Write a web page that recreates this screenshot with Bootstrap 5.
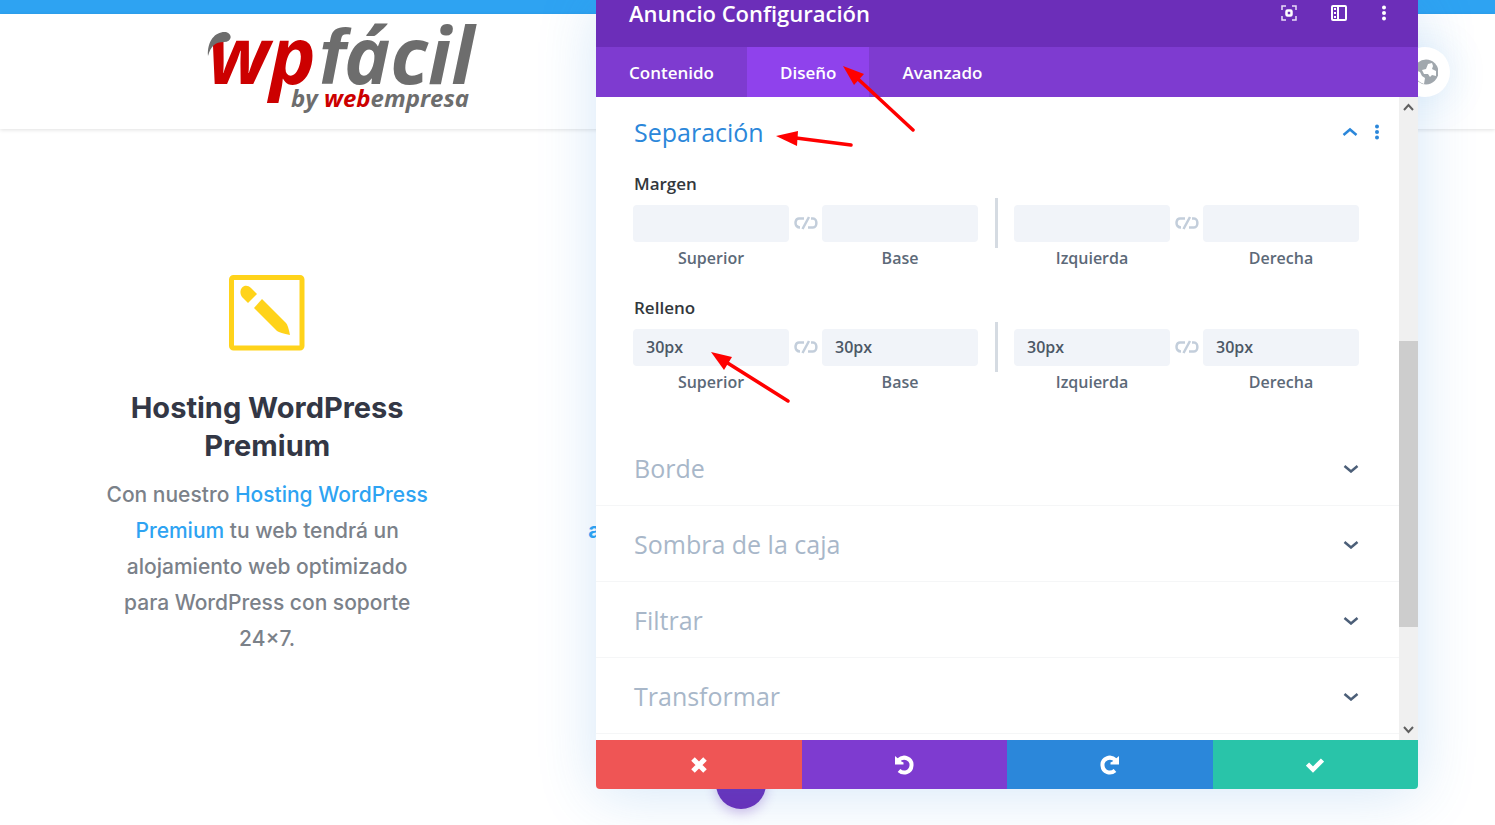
<!DOCTYPE html>
<html lang="es">
<head>
<meta charset="utf-8">
<meta name="viewport" content="width=device-width, initial-scale=1">
<title>Anuncio Configuración</title>
<link href="https://cdn.jsdelivr.net/npm/bootstrap@5.3.0/dist/css/bootstrap.min.css" rel="stylesheet">
<style>
body{font-family:"Open Sans","Noto Sans",sans-serif;min-height:100vh;overflow:hidden;background:#fff}
a{text-decoration:none;color:#2ea3f2}
.topbar{height:14px;background:#2ea3f2}
.site-head{height:115px;padding-left:204px;box-shadow:0 1px 4px rgba(0,0,0,.12)}
.logo{overflow:visible}
.columns{padding:0 27px}
.blurb{width:330px;margin-top:145px;font-family:Inter,"Open Sans",sans-serif}
.blurb h2{font-size:29px;line-height:38px;font-weight:700;color:#333745;margin:38px 0 12px}
.blurb p{font-size:21px;line-height:36px;font-weight:500;color:#7b8189;margin:0}
.blurb-next{padding:384px 0 0 81px;font-family:Inter,sans-serif;font-size:21px;line-height:36px;font-weight:700}
.modal-box{top:0;right:77px;width:822px;height:789px;border-radius:0 0 4px 4px;box-shadow:0 5px 60px rgba(43,135,218,.2);z-index:5}
.box-head{height:47px;background:#6c2eb9;padding:0 31px 21px 33px;color:#fff}
.box-head h1{font-size:22px;line-height:24px;font-weight:600;margin:0}
.box-head button,.icon-btn{border:0;background:none;padding:0;color:inherit;display:flex}
.head-tools{gap:34px}
.box-tabs{height:50px;background:#7e3bd0}
.box-tabs button{border:0;background:none;color:#fff;font-size:17px;font-weight:600;padding:2px 33px 0}
.box-tabs .active{background:#8f42ec}
.box-body{min-height:0}
.sect{height:76px;padding:0 39px 0 38px;border-bottom:1px solid #f5f6f7;color:#a8b7c9}
.sect h2,.open-head h2{font-size:25px;line-height:34px;font-weight:400;margin:0}
.open-part{padding:0 40px 38px 37px}
.open-head{height:72px;padding:0 0 2px 1px;margin-right:-21px;color:#2b87da}
.group-name{font-size:17px;line-height:29px;font-weight:600;color:#32373c;padding-left:1px}
.sides{display:grid;grid-template-columns:1fr 33px 1fr 36px 1fr 33px 1fr;grid-template-rows:50px 20px;align-items:center;justify-items:center}
.sides-gap{margin-bottom:25px}
.sides input{width:100%;height:37px;border:0;border-radius:4px;background:#f1f4f9;padding:0 13px;font-size:16px;font-weight:600;color:#4c5866}
.sides label{font-size:16px;line-height:20px;font-weight:600;color:#5c6978}
.rule{width:3px;height:50px;background:#d5dbe2}
.track{width:19px;background:#f0f0f0}
.thumb{height:286px;margin-bottom:93px;background:#cdcdcd}
.box-foot{height:49px}
.box-foot button{border:0;color:#fff;display:flex;align-items:center;justify-content:center}
.b-red{background:#ef5555;border-radius:0 0 0 4px}.b-pur{background:#7e3bd0}.b-blu{background:#2b87da}.b-grn{background:#29c4a9;border-radius:0 0 4px 0}
.arrows{inset:0;pointer-events:none}
.fab{border:0;width:50px;height:50px;left:calc(50% - 32px);top:759px;background:#6c2eb9;box-shadow:0 4px 12px rgba(108,46,185,.3)}
.globe{border:0;width:50px;height:50px;right:45px;top:47px;background:#fff;box-shadow:0 2px 40px rgba(43,135,218,.15);color:#a0a7ad;z-index:6;clip-path:inset(-33px -45px -60px 18px)}
</style>
</head>
<body class="position-relative">
<div class="topbar"></div>
<header class="site-head">
<a href="#" aria-label="wpfácil by webempresa"><svg class="logo d-block" width="280" height="115" viewBox="204 14 280 115" font-family="Open Sans, Noto Sans, sans-serif" font-weight="700" font-style="italic">
<g font-size="78"><text x="208" y="84" fill="#c00">wp</text>
<text x="319" y="84" fill="#6d6d6d"><tspan font-family="Liberation Sans">f</tspan><tspan x="344">ácil</tspan></text></g>
<path d="M208 56C207 40 216 31 226 32C233 34 232 42 224 42C215 42 211 46 208 56Z" fill="#6d6d6d"/>
<text x="291" y="107" font-size="24" fill="#6d6d6d">by <tspan fill="#c00">web</tspan><tspan>empresa</tspan></text>
</svg></a>
</header>
<main class="columns">
<div class="row g-0">
<section class="col-4">
<div class="blurb mx-auto text-center">
<svg class="d-block mx-auto" width="78" height="77" viewBox="0 0 78 77" fill="#ffd31a"><rect x="3.500" y="3.500" width="70.500" height="70.500" rx="2" fill="none" stroke="#ffd31a" stroke-width="5"/><path d="M20 29L14 23C9 15 17 8 23 14L29 20Z"/><path d="M34 25L58 49Q60 51 62 61Q52 59 49 57L26 34Z"/></svg>
<h2>Hosting WordPress Premium</h2>
<p>Con nuestro <a href="#">Hosting WordPress Premium</a> tu web tendrá un alojamiento web optimizado para WordPress con soporte 24×7.</p>
</div>
</section>
<section class="col-4 blurb-next"><a href="#">a</a></section>
</div>
</main>
<button class="fab position-absolute rounded-circle" aria-label="Menú"></button>
<button class="globe position-absolute rounded-circle p-0 d-flex align-items-center justify-content-center" aria-label="Idioma"><svg width="26" height="26" viewBox="0 0 26 26"><circle cx="14" cy="13" r="12.500" fill="currentColor"/><path d="M3 11l5 2 2 4 3 2-1 6C6 23 2 19 3 11zM10 11l4-1 2-5 4-1 1 3-1 3 4 2 0 5-4-1-2 2-2-3-4 0z" fill="#fff"/></svg></button>
<div class="modal-box position-absolute bg-white d-flex flex-column" role="dialog" aria-label="Anuncio Configuración">
<div class="box-head d-flex align-items-center">
<h1 class="me-auto">Anuncio Configuración</h1>
<div class="head-tools d-flex">
<button aria-label="Expandir"><svg width="16" height="16" viewBox="0 0 16 16" fill="none" stroke="#e9ddf7" stroke-width="1.500"><path d="M1 5V1h4M11 1h4v4M15 11v4h-4M5 15H1v-4"/><rect x="5.500" y="5.500" width="5" height="5" rx="1" stroke-width="2.500" stroke="#fff"/></svg></button>
<button aria-label="Acoplar"><svg width="16" height="16" viewBox="0 0 16 16" fill="none" stroke="#fff" stroke-width="2"><rect x="1" y="1" width="14" height="14" rx="1"/><path d="M7 1v14"/><path d="M4 3v10" stroke-dasharray="2 2"/></svg></button>
<button aria-label="Más"><svg width="6" height="16" viewBox="0 0 6 16" fill="#fff"><circle cx="3" cy="2.500" r="2"/><circle cx="3" cy="8" r="2"/><circle cx="3" cy="13.500" r="2"/></svg></button>
</div>
</div>
<div class="box-tabs d-flex"><button>Contenido</button><button class="active">Diseño</button><button>Avanzado</button></div>
<div class="box-body d-flex flex-grow-1 overflow-hidden">
<div class="flex-grow-1">
<div class="open-part">
<div class="open-head d-flex align-items-center">
<h2 class="me-auto">Separación</h2>
<button class="icon-btn" aria-label="Contraer"><svg width="16" height="10" viewBox="0 0 16 10" fill="none" stroke="currentColor" stroke-width="2.500"><path d="M1.500 8L8 2.500 14.500 8"/></svg></button>
<button class="icon-btn ms-3" aria-label="Opciones"><svg width="6" height="16" viewBox="0 0 6 16" fill="currentColor"><circle cx="3" cy="2.500" r="2"/><circle cx="3" cy="8" r="2"/><circle cx="3" cy="13.500" r="2"/></svg></button>
</div>
<div class="group-name">Margen</div>
<div class="sides sides-gap">
<input id="m1"><svg width="24" height="14"><use href="#unlink"/></svg><input id="m2"><span class="rule"></span><input id="m3"><svg width="24" height="14"><use href="#unlink"/></svg><input id="m4">
<label for="m1">Superior</label><span></span><label for="m2">Base</label><span></span><label for="m3">Izquierda</label><span></span><label for="m4">Derecha</label>
</div>
<div class="group-name">Relleno</div>
<div class="sides">
<input id="r1" value="30px"><svg width="24" height="14"><use href="#unlink"/></svg><input id="r2" value="30px"><span class="rule"></span><input id="r3" value="30px"><svg width="24" height="14"><use href="#unlink"/></svg><input id="r4" value="30px">
<label for="r1">Superior</label><span></span><label for="r2">Base</label><span></span><label for="r3">Izquierda</label><span></span><label for="r4">Derecha</label>
</div>
</div>
<div class="sect d-flex align-items-center justify-content-between"><h2>Borde</h2><button class="icon-btn" aria-label="Abrir Borde"><svg width="18" height="10"><use href="#down"/></svg></button></div>
<div class="sect d-flex align-items-center justify-content-between"><h2>Sombra de la caja</h2><button class="icon-btn" aria-label="Abrir Sombra de la caja"><svg width="18" height="10"><use href="#down"/></svg></button></div>
<div class="sect d-flex align-items-center justify-content-between"><h2>Filtrar</h2><button class="icon-btn" aria-label="Abrir Filtrar"><svg width="18" height="10"><use href="#down"/></svg></button></div>
<div class="sect d-flex align-items-center justify-content-between"><h2>Transformar</h2><button class="icon-btn" aria-label="Abrir Transformar"><svg width="18" height="10"><use href="#down"/></svg></button></div>
</div>
<div class="track d-flex flex-column align-items-stretch">
<svg width="19" height="20" fill="none" stroke="#606060" stroke-width="2"><path d="M5 13l4.500-5 4.500 5"/></svg>
<div class="flex-grow-1"></div><div class="thumb"></div>
<svg width="19" height="20" fill="none" stroke="#606060" stroke-width="2"><path d="M5 7l4.500 5L14 7"/></svg>
</div>
</div>
<div class="box-foot d-flex">
<button class="b-red flex-fill w-25" aria-label="Descartar"><svg width="16" height="16" viewBox="0 0 16 16" stroke="#fff" stroke-width="5"><path d="M2 2l12 12M14 2L2 14"/></svg></button>
<button class="b-pur flex-fill w-25" aria-label="Deshacer"><svg width="20" height="20" viewBox="0 0 20 20" fill="none" stroke="#fff" stroke-width="4"><path d="M4 5.500C10-.5 18 4 17.500 10.500C17 17.500 9.500 19.500 5 15.500"/><path d="M1 1V9.500H9.500V7.500L7.500 6.500Z" fill="#fff" stroke="none"/></svg></button>
<button class="b-blu flex-fill w-25" aria-label="Rehacer"><svg width="20" height="20" viewBox="0 0 20 20" fill="none" stroke="#fff" stroke-width="4"><path d="M16 5.500C10-.5 2 4 2.500 10.500C3 17.500 10.500 19.500 15 15.500"/><path d="M19 1V9.500H10.500V7.500L12.500 6.500Z" fill="#fff" stroke="none"/></svg></button>
<button class="b-grn flex-fill w-25" aria-label="Guardar"><svg width="18" height="16" viewBox="0 0 18 16" fill="none" stroke="#fff" stroke-width="4.500"><path d="M1.500 7L7 12.500 16.500 3"/></svg></button>
</div>
<svg class="arrows position-absolute" width="822" height="789" viewBox="596 0 822 789" fill="red" stroke="none"><path d="M843 66l21 8-10 11z"/><path d="M776 136l22-5-1 15z"/><path d="M711 352l21 5-8 13z"/><path d="M857 78l56 52M796 138l55 7M726 362l62 39" stroke="red" stroke-width="3.500" stroke-linecap="round"/></svg>
</div>
<svg class="d-none"><defs>
<g id="unlink" fill="none" stroke="#c3cedb" stroke-width="2.500"><path d="M10 2.500H5C1 2.500 1 8 2.500 10Q4 11.500 6 11.500M15 1L8.500 13M17 2.500h2C23.500 2.500 23.500 11.500 19 11.500H14"/></g>
<path id="down" d="M2.500 3L9 8.500 15.500 3" fill="none" stroke="#4c5f78" stroke-width="2.500"/>
</defs></svg>
<script src="https://cdn.jsdelivr.net/npm/bootstrap@5.3.0/dist/js/bootstrap.bundle.min.js"></script>
</body>
</html>
